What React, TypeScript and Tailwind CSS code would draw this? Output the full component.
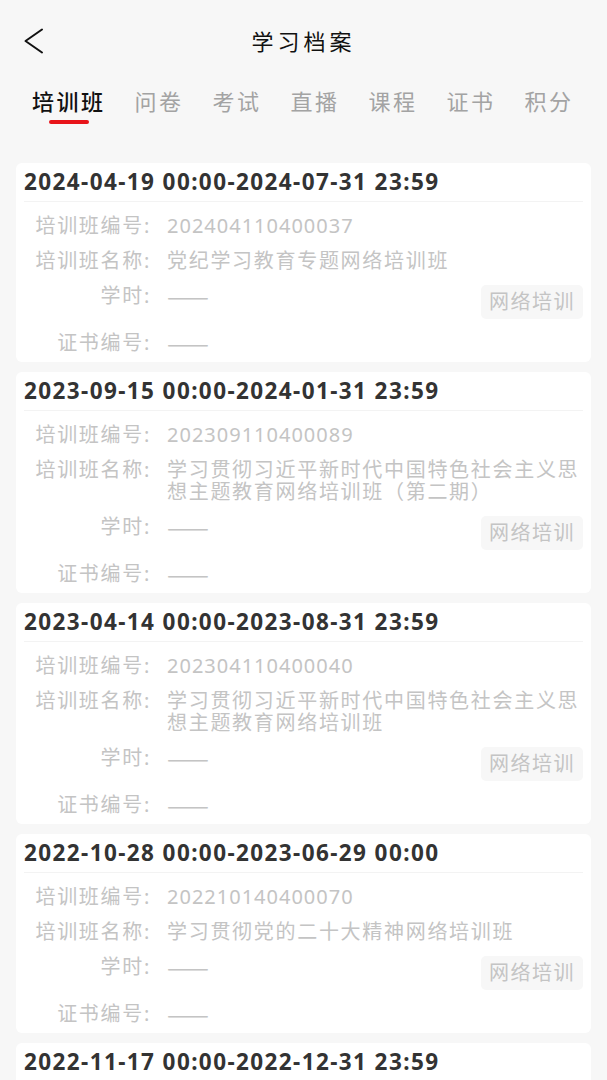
type Record = {
  period: string;
  code: string;
  name: string;
  hours: string;
  cert: string;
  kind: string;
};

const tabs = ['培训班', '问卷', '考试', '直播', '课程', '证书', '积分'];

const records: Record[] = [
  {
    period: '2024-04-19 00:00-2024-07-31 23:59',
    code: '202404110400037',
    name: '党纪学习教育专题网络培训班',
    hours: '——',
    cert: '——',
    kind: '网络培训',
  },
  {
    period: '2023-09-15 00:00-2024-01-31 23:59',
    code: '202309110400089',
    name: '学习贯彻习近平新时代中国特色社会主义思想主题教育网络培训班（第二期）',
    hours: '——',
    cert: '——',
    kind: '网络培训',
  },
  {
    period: '2023-04-14 00:00-2023-08-31 23:59',
    code: '202304110400040',
    name: '学习贯彻习近平新时代中国特色社会主义思想主题教育网络培训班',
    hours: '——',
    cert: '——',
    kind: '网络培训',
  },
  {
    period: '2022-10-28 00:00-2023-06-29 00:00',
    code: '202210140400070',
    name: '学习贯彻党的二十大精神网络培训班',
    hours: '——',
    cert: '——',
    kind: '网络培训',
  },
  {
    period: '2022-11-17 00:00-2022-12-31 23:59',
    code: '202211100400012',
    name: '网络培训班',
    hours: '——',
    cert: '——',
    kind: '网络培训',
  },
];

function Label({ children }: { children: string }) {
  return <div className="w-[127px] shrink-0 text-right">{children}</div>;
}

// em dashes drawn from the CJK face so they join into one line
function Dash({ children }: { children: string }) {
  return (
    <div
      className="ml-[16px] flex-1 text-[25px] leading-[20px] tracking-[0px]"
      style={{ fontFamily: '"Noto Sans CJK SC", sans-serif' }}
    >
      {children}
    </div>
  );
}

function RecordCard({ record }: { record: Record }) {
  return (
    <div className="rounded-[6px] bg-white px-[8px]">
      <div className="flex h-[38px] items-center text-[22.5px] font-bold leading-none tracking-[1.4px] text-[#333333]">
        {record.period}
      </div>
      <div className="h-px bg-[#f3f3f3]" />
      <div className="flex flex-col gap-[13px] pt-[13px] pb-[8px] text-[20px] leading-[22px] tracking-[1.7px] text-[#c4c4c4]">
        <div className="flex items-start">
          <Label>培训班编号:</Label>
          <div className="ml-[16px] flex-1 tracking-[1px]">{record.code}</div>
        </div>
        <div className="flex items-start">
          <Label>培训班名称:</Label>
          <div className="ml-[16px] flex-1">{record.name}</div>
        </div>
        <div className="flex items-start">
          <Label>学时:</Label>
          <Dash>{record.hours}</Dash>
          <div className="flex h-[34px] items-center rounded-[5px] bg-[#f7f7f7] px-[8px] tracking-[1.5px]">
            {record.kind}
          </div>
        </div>
        <div className="flex items-start">
          <Label>证书编号:</Label>
          <Dash>{record.cert}</Dash>
        </div>
      </div>
    </div>
  );
}

export default function App() {
  return (
    <div
      className="h-[1080px] overflow-hidden bg-[#f7f7f7]"
      style={{ fontFamily: '"Noto Sans", "Noto Sans CJK SC", sans-serif' }}
    >
      {/* nav bar */}
      <div className="flex h-[82px] items-center">
        <div className="flex w-[70px] items-center pl-[24px]">
          <svg width="20" height="26" viewBox="0 0 20 26" fill="none">
            <polyline
              points="18,1.5 1.5,13 18,24.5"
              stroke="#111"
              strokeWidth="2"
              strokeLinecap="round"
              strokeLinejoin="round"
            />
          </svg>
        </div>
        <div className="flex-1 text-center text-[22px] leading-none tracking-[4px] text-[#111]">
          学习档案
        </div>
        <div className="w-[70px]" />
      </div>

      {/* tabs */}
      <div className="flex gap-[29px] pt-[4px] pl-[32px]">
        {tabs.map((tab, i) => (
          <div key={tab} className="flex flex-col items-center">
            <div
              className={
                i === 0
                  ? 'text-[22px] leading-[30px] tracking-[2.5px] text-[#111] font-medium'
                  : 'text-[22px] leading-[30px] tracking-[2.5px] text-[#a3a3a3]'
              }
            >
              {tab}
            </div>
            <div
              className={
                i === 0
                  ? 'mt-[4px] h-[4px] w-[40px] rounded-full bg-[#e8141a]'
                  : 'mt-[4px] h-[4px] w-[40px]'
              }
            />
          </div>
        ))}
      </div>

      {/* records */}
      <div className="mx-[16px] mt-[39px] flex flex-col gap-[10px]">
        {records.map((r) => (
          <RecordCard key={r.period} record={r} />
        ))}
      </div>
    </div>
  );
}
